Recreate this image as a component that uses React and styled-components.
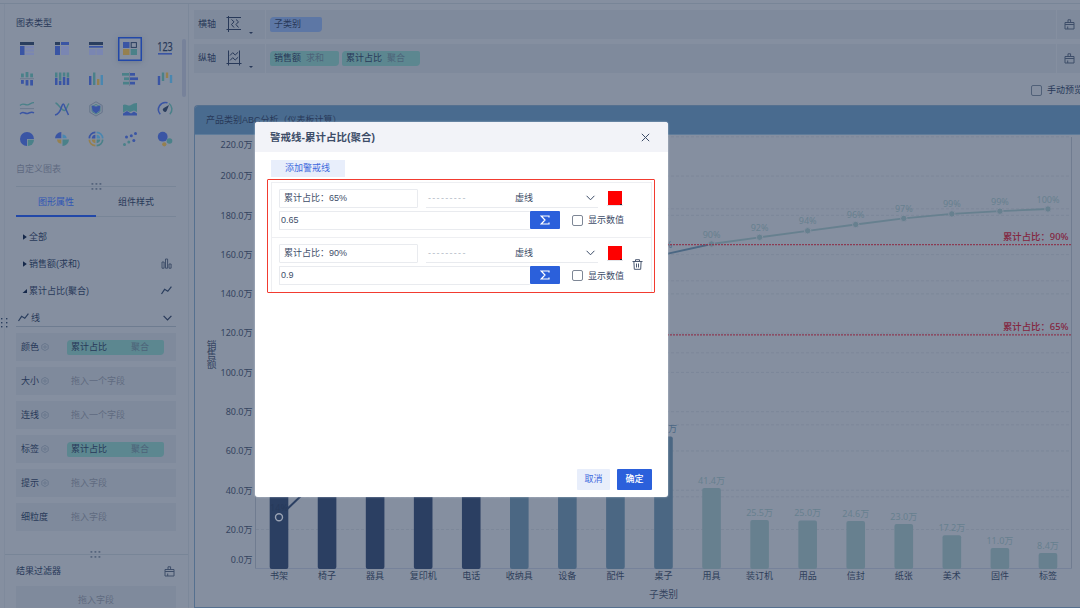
import React from "react";
import styled, { createGlobalStyle } from "styled-components";

const c = {
  bg: "#858fa0",
  row: "#7f8a9c",
  line: "#788597",
  text: "#283959",
  soft: "#5f6a80",
  blue: "#2248a8",
  teal: "#5c8790",
  iconBlue: "#3a55a4",
  iconTeal: "#4a8189",
  iconGold: "#95804f",
  iconSky: "#4a87b0",
  iconPale: "#7a86b2",
  iconDark: "#2a3e5e",
};

const GlobalStyle = createGlobalStyle`
  *, *::before, *::after { box-sizing: border-box; }
  body {
    margin: 0;
    overflow: hidden;
    background: ${c.bg};
    font-family: "Liberation Sans", "Noto Sans CJK SC", sans-serif;
    font-size: 9px;
    line-height: 14px;
    color: ${c.text};
  }
`;

const Page = styled.div`
  position: relative;
  width: 1080px;
  height: 608px;
  overflow: hidden;
  display: flex;
  flex-direction: column;
  background: ${c.bg};
  white-space: nowrap;
`;
const TopStrip = styled.div`
  flex: none;
  height: 4px;
  border-bottom: 1px solid ${c.line};
`;
const Workspace = styled.div`
  flex: 1;
  min-height: 0;
  display: flex;
`;
const Gutter = styled.div`
  width: 5px;
  flex: none;
  border-right: 1px solid #7f8a9c;
  padding-top: 314px;
`;
const Sidebar = styled.aside`
  width: 184px;
  flex: none;
  display: flex;
  flex-direction: column;
  border-right: 1px solid #7c889a;
`;
const SectionTitle = styled.div`
  padding: 12px 0 0 11px;
  height: 30px;
`;
const ChartTypes = styled.div`
  display: flex;
  height: 125px;
  padding-left: 5px;
`;
const TypeGrid = styled.div`
  display: grid;
  grid-template-columns: repeat(5, 34.4px);
  grid-template-rows: 29px 31px 30px 30px;
  align-items: center;
  justify-items: center;
`;
const TypeCell = styled.div`
  width: 24px;
  height: 24px;
  display: grid;
  place-items: center;
  border: 1px solid transparent;
  ${(p) => p.$active && `border-color: ${c.blue}; box-shadow: 0 1px 5px #6a7890, inset 0 0 0 .5px ${c.blue};`}
`;
const ScrollThumb = styled.div`
  width: 4px;
  height: 58px;
  margin: 5px 0 0 0;
  border-radius: 2px;
  background: #77829a;
`;
const CustomLabel = styled.div`
  padding: 3px 0 0 11px;
  height: 24px;
  color: ${c.soft};
`;
const Splitter = styled.div`
  display: flex;
  justify-content: center;
  align-items: center;
  height: 7px;
  padding-right: ${(p) => (p.$full ? 2 : 0)}px;
  margin: ${(p) => (p.$full ? "0" : "0 12px 0 11px")};
  background: linear-gradient(${c.line}, ${c.line}) 0 3px / 100% 1px no-repeat;
`;
const Tabs = styled.div`
  display: flex;
  margin: 0 12px 0 11px;
  height: 27px;
`;
const Tab = styled.div`
  flex: 1;
  text-align: center;
  padding-top: 5px;
  color: ${(p) => (p.$active ? "#2f55b4" : c.text)};
  border-bottom: ${(p) => (p.$active ? `2px solid ${c.blue}` : `1px solid ${c.line}`)};
`;
const Tree = styled.div`
  padding: 6px 12px 0 17px;
  height: 87px;
`;
const TreeRow = styled.div`
  display: flex;
  align-items: center;
  height: 27px;
  gap: 2px;
  padding-right: 4px;
`;
const Grow = styled.span`
  flex: 1;
`;
const LineHead = styled.div`
  display: flex;
  align-items: center;
  gap: 2px;
  height: 23px;
  margin: 0 12px 0 11px;
  padding: 5px 4px 0 2px;
  border-bottom: 1px solid #6e7c90;
`;
const Slots = styled.div`
  display: flex;
  flex-direction: column;
  gap: 6px;
  padding: 6px 12px 0 11px;
  height: 224px;
`;
const Slot = styled.div`
  height: 28px;
  flex: none;
  display: flex;
  align-items: center;
  padding-left: 5px;
  background: ${c.row};
`;
const SlotName = styled.span`
  width: 46px;
  display: flex;
  align-items: center;
  gap: 2px;
`;
const Hint = styled.span`
  color: ${c.soft};
  padding-left: 4px;
`;
const Pill = styled.span`
  display: inline-flex;
  align-items: center;
  justify-content: ${(p) => (p.$spread ? "space-between" : "flex-start")};
  gap: 5px;
  width: ${(p) => p.$w}px;
  height: 15px;
  padding: 0 ${(p) => (p.$spread ? 15 : 4)}px 0 4px;
  border-radius: 4px 2px 4px 2px;
  background: ${(p) => (p.$blue ? "#5d77a5" : c.teal)};
`;
const Agg = styled.span`
  color: #4d6379;
`;
const FilterHead = styled.div`
  display: flex;
  justify-content: space-between;
  align-items: center;
  height: 28px;
  padding: 0 13px 2px 11px;
`;
const FilterDrop = styled.div`
  margin: 0 12px 0 11px;
  flex: 1;
  padding-top: 7px;
  text-align: center;
  color: ${c.soft};
  background: ${c.row};
`;

const Main = styled.main`
  flex: 1;
  min-width: 0;
  display: flex;
  flex-direction: column;
  padding: 6px 0 0 5px;
`;
const AxisRow = styled.div`
  display: flex;
  align-items: center;
  height: 29px;
  flex: none;
  margin-bottom: 5px;
  background: ${c.row};
`;
const AxisName = styled.div`
  width: 72px;
  height: 100%;
  display: flex;
  align-items: center;
  padding: 0 0 1px 4px;
  border-right: 1px solid ${c.bg};
`;
const AxisIcon = styled.span`
  display: flex;
  margin-left: 10px;
`;
const Caret = styled.i`
  border: 2px solid transparent;
  border-top-color: ${c.text};
  border-bottom: 0;
  margin: 17px 0 0 7px;
`;
const PillList = styled.div`
  flex: 1;
  display: flex;
  gap: 3px;
  padding: 0 0 1px 4px;
`;
const AxisClear = styled.div`
  width: 24px;
  height: 100%;
  display: flex;
  align-items: center;
  padding: 0 0 1px 7px;
  border-left: 1px solid ${c.bg};
`;
const Preview = styled.div`
  display: flex;
  align-items: center;
  height: 26px;
  padding: 0 0 2px 837px;
  gap: 5px;
  margin-bottom: 1px;
`;
const Check = styled.span`
  width: 11px;
  height: 11px;
  flex: none;
  border: 1px solid ${(p) => (p.$dim ? "#506078" : "#7e8796")};
  border-radius: 2px;
`;
const ChartCard = styled.section`
  flex: 1;
  min-height: 0;
  border: 1px solid #55708f;
  border-right: 0;
  border-radius: 4px 0 0 0;
  overflow: hidden;
`;
const ChartTitle = styled.div`
  height: 29px;
  padding: 7px 0 0 11px;
  background: #496b8f;
  border-bottom: 1px solid #5f7c9a;
`;
const Plot = styled.svg`
  display: block;
  font-family: "Noto Sans", "Noto Sans CJK SC", sans-serif;
  font-size: 9px;
`;

const Modal = styled.div`
  position: absolute;
  left: 255px;
  top: 122px;
  width: 413px;
  height: 375px;
  display: flex;
  flex-direction: column;
  overflow: hidden;
  border-radius: 3px;
  background: #fff;
  color: #3d4d68;
  box-shadow: 0 0 2px rgba(230, 238, 250, 0.7);
`;
const ModalHead = styled.header`
  display: flex;
  align-items: center;
  justify-content: space-between;
  height: 30px;
  padding: 0 18px 0 15px;
  background: #f2f3f8;
  font-size: 10.5px;
  font-weight: 700;
`;
const AddButton = styled.div`
  width: 74px;
  height: 17px;
  margin: 8px 0 2px 16px;
  padding-right: 1px;
  line-height: 17px;
  text-align: center;
  background: #e8eefb;
  color: #3f69dd;
`;
const RedFrame = styled.div`
  width: 388px;
  height: 114px;
  margin-left: 12px;
  padding: 2px 2px 0 3px;
  border: 1px solid #f23b30;
  border-radius: 1px;
`;
const Entries = styled.div`
  height: 110px;
  border: solid #eeeff2;
  border-width: 1px 1px 0 1px;
`;
const Entry = styled.div`
  display: flex;
  align-items: center;
  height: 55px;
  padding: 0 0 2px 7px;
  border-bottom: ${(p) => (p.$last ? 0 : 1)}px solid #eeeff2;
`;
const EntryLines = styled.div`
  width: 353px;
  display: flex;
  flex-direction: column;
  gap: 3px;
`;
const EntryLine = styled.div`
  display: flex;
  height: 19px;
`;
const Input = styled.div`
  width: ${(p) => p.$w}px;
  height: 19px;
  padding-left: ${(p) => p.$pad}px;
  line-height: 17px;
  border: 1px solid #e9ebef;
  border-right-width: ${(p) => (p.$joined ? 0 : 1)}px;
  border-radius: 1px;
`;
const StyleSelect = styled.div`
  width: 172px;
  margin-left: 8px;
  display: flex;
  align-items: center;
  border-bottom: 1px solid #e9ebef;
`;
const Dashes = styled.span`
  width: 89px;
  padding-left: 2px;
  letter-spacing: 1.3px;
  color: #b0b7c3;
`;
const Swatch = styled.div`
  width: 16px;
  height: 17px;
  margin-left: 9px;
  padding: 2px 0 0 1px;
  border-bottom: 1px solid #e3e5ea;
`;
const Color = styled.div`
  width: 14px;
  height: 14px;
  background: linear-gradient(#302030, #302030) 100% 100% / 2px 1px no-repeat, #fe0000;
`;
const SumButton = styled.div`
  width: 30px;
  height: 18px;
  display: grid;
  place-items: center;
  border-radius: 1px;
  background: #2b60db;
`;
const ShowValue = styled.div`
  display: flex;
  align-items: center;
  gap: 5px;
  margin-left: 12px;
`;
const Footer = styled.footer`
  display: flex;
  justify-content: flex-end;
  gap: 7px;
  margin-top: auto;
  padding: 0 16px 7px 0;
`;
const Button = styled.div`
  width: ${(p) => (p.$primary ? 35 : 33)}px;
  height: 21px;
  line-height: 21px;
  text-align: center;
  border-radius: 1px;
  font-weight: ${(p) => (p.$primary ? 500 : 400)};
  color: ${(p) => (p.$primary ? "#fff" : "#3f69dd")};
  background: ${(p) => (p.$primary ? "#2b60db" : "#e8eefb")};
`;

const Svg = ({ w = 16, h = w, children, ...rest }) => (
  <svg width={w} height={h} viewBox={`0 0 ${w} ${h}`} fill="none" overflow="visible" {...rest}>
    {children}
  </svg>
);
const R = ({ b, f }) => <rect x={b[0]} y={b[1]} width={b[2]} height={b[3]} fill={f} />;
const { iconBlue: B, iconTeal: T, iconGold: G, iconSky: S, iconPale: P, iconDark: D } = c;

const DragDots = ({ f = "#56657d" }) => (
  <Svg w={11} h={7}>
    {[0.5, 4.5, 8.5].map((x) => [0, 5].map((y) => <R key={`${x}${y}`} b={[x, y, 1.8, 1.8]} f={f} />))}
  </Svg>
);
const SideDots = () => (
  <svg width="9" height="12" viewBox="0 0 9 12" overflow="visible" display="block">
    {[1, 6].map((x) => [0, 4, 8].map((y) => <R key={`${x}${y}`} b={[x, y, 1.4, 1.4]} f={D} />))}
  </svg>
);
const Gear = () => (
  <Svg w={8} stroke="#66758b" strokeWidth=".9">
    <path d="M4 .4 7.200 2.200v3.600L4 7.600.8 5.800V2.200z" />
    <circle cx="4" cy="4" r="1.200" />
  </Svg>
);
const Brush = () => (
  <Svg w={11} stroke="#3e4e69" strokeWidth="1">
    <path d="M1 3.500h9v6.500H1zM4 3.500V.8h2.600v2.700M1 5.500h9M3.700 7.500V10" />
  </Svg>
);
const Chevron = ({ s = c.text }) => (
  <Svg w={9} h={6} stroke={s} strokeWidth="1.200">
    <path d="m.6.8 3.900 4 3.900-4" />
  </Svg>
);
const LineIcon = () => (
  <Svg w={11} h={9} stroke={D} strokeWidth="1.200">
    <path d="M.5 8 3.600 3.300l3.200 2L10.400.7" />
  </Svg>
);
const BarsIcon = () => (
  <Svg w={11} h={11} stroke="#3e4e69" strokeWidth="1">
    <path d="M1 4h2.100v6.200H1zM4.500 1h2.100v9.200H4.500zM8 6h2.100v4.200H8z" />
  </Svg>
);
const Arrow = ({ open }) => (
  <Svg w={5} h={6}>
    <path d={open ? "M5 1v4H.5z" : "M1 .3 4.800 3 1 5.700z"} fill="#15284a" />
  </Svg>
);
const Trash = () => (
  <Svg w={11} stroke="#4a5870" strokeWidth="1">
    <path d="M.5 2.500h10M3.500 2.500V.7h4v1.800M1.900 2.500l.4 7.800h6.400l.4-7.800M4.500 4.500v4M6.500 4.500v4" />
  </Svg>
);
const AxisX = () => (
  <Svg w={16} stroke={c.text} strokeWidth="1">
    <path d="M2.500 0v16M.5 1.500h14.500M.5 13.500h14.500M5.500 3.500l2.500 2.300-2.500 2.700 2.500 3M10 3.500l2.500 2.300-2.500 2.700 2.500 3" />
  </Svg>
);
const AxisY = () => (
  <Svg w={16} stroke={c.text} strokeWidth="1">
    <path d="M2.500.5v15M13.500.5v15M.5 13.500h15M4 5.500l2.700-2.800 2.500 2.300 3-2.800M4 10.500l2.700-2.800 2.500 2.300 3-2.800" />
  </Svg>
);

const typeIcons = [
  <><R b={[1, 1, 14, 3]} f={D} /><R b={[1, 5, 4.5, 9]} f={B} /><R b={[6.5, 5, 8.5, 2.3]} f={P} /><R b={[6.5, 8.3, 8.5, 2.3]} f={P} /><R b={[6.5, 11.6, 8.5, 2.4]} f={P} /></>,
  <><R b={[1, 1, 5, 3]} f={D} /><R b={[7, 1, 8, 3]} f={B} /><R b={[1, 5, 5, 9]} f={B} /><R b={[7, 5, 8, 9]} f={P} /></>,
  <><R b={[1, 1, 14, 3]} f={D} /><R b={[1, 5, 14, 1.7]} f={B} /><R b={[1, 8, 6.6, 6]} f={P} /><R b={[8.5, 8, 6.5, 6]} f={P} /></>,
  <><R b={[1, 1, 6.5, 6]} f={B} /><rect x="9.2" y="1.6" width="5.2" height="4.8" stroke={D} /><R b={[1, 8, 6.5, 6]} f={G} /><R b={[8.7, 8, 6.3, 6]} f={T} /></>,
  <><text x="8" y="10" textAnchor="middle" fontSize="12" fontFamily="Open Sans, sans-serif" fill={c.text} stroke={c.text} strokeWidth=".25" textLength="15.500" lengthAdjust="spacingAndGlyphs">123</text><R b={[1, 12, 14, 1.6]} f={B} /></>,
  <><R b={[2, 2.5, 2.8, 3.8]} f={T} /><R b={[6.6, 1, 2.8, 5.3]} f={T} /><R b={[11.2, 2.5, 2.8, 3.8]} f={T} /><R b={[1, 7.2, 14, 1]} f="#6c7a8f" /><R b={[2, 9, 2.8, 3.8]} f={B} /><R b={[6.6, 9, 2.8, 5.5]} f={B} /><R b={[11.2, 9, 2.8, 5.5]} f={B} /></>,
  <>{[1, 4.9, 8.8, 12.7].map((x, i) => <g key={x}><R b={[x, 1.5, 2.5, [5, 8, 4, 5][i]]} f={T} /><R b={[x, 2 + [5, 8, 4, 5][i], 2.5, 12 - [5, 8, 4, 5][i]]} f={B} /></g>)}</>,
  <><R b={[1, 5, 2.4, 9]} f={B} /><R b={[5, 1.5, 2.4, 12.5]} f={T} /><R b={[9, 8, 2.4, 6]} f={G} /><R b={[12.6, 4, 2.4, 10]} f={S} /></>,
  <><R b={[0, 2, 7, 2.7]} f={T} /><R b={[2, 6.4, 5, 2.7]} f={T} /><R b={[1, 10.8, 6, 2.7]} f={T} /><R b={[7.2, 1, .8, 14]} f="#6c7a8f" /><R b={[8, 2, 5, 2.7]} f={B} /><R b={[8, 6.4, 8, 2.7]} f={B} /><R b={[8, 10.8, 5, 2.7]} f={B} /></>,
  <><R b={[.8, 5, 2.4, 9]} f={B} /><R b={[4.8, 1.5, 2.4, 8.5]} f={T} /><R b={[8.8, 1.5, 2.4, 5.5]} f={G} /><R b={[12.8, 4, 2.4, 8]} f={S} /></>,
  <><path d="M1 4.500c3-3.500 5 0 7.500-.6 2.500-.5 3.500-2.300 6.500-2.200" stroke={T} strokeWidth="1.300" /><path d="M1 7.600h14" stroke="#6c7a8f" /><path d="M1 13c3-3.500 5 0 7.500-.6 2.500-.5 3.500-2.300 6.500-.6" stroke={B} strokeWidth="1.500" /></>,
  <><path d="M1.500 2c3 .5 5.500 7.500 9 7.500 2 0 2.500-5 4.500-7" stroke={T} strokeWidth="1.400" /><path d="M1 14c3-.5 5-3 6.500-8 1.200-4 2.200-4 3.200-.5L14.500 14" stroke={B} strokeWidth="1.500" /></>,
  <><path d="M8 .8 14.200 4.400v7L8 15l-6.200-3.600v-7z" stroke="#66758b" /><path d="M8 3.500 12 5.500v5L8 13l-4-2.500v-5z" stroke={T} /><path d="m3.500 4.600 4.500.8 4.400-1-.8 5.400L8 12.400 4.600 10z" fill={B} /></>,
  <><path d="M1 4c3-2 5 2 8 0 2-1.300 3.500-2 6-2v9l-3-1.500L8 11 5 9.500l-4 2z" fill={T} /><path d="M1 12.500 5 10l4 2.500 3-2 3 2V14.500H1z" fill={B} /></>,
  <><path d="M3.300 13.200A7 7 0 0 1 10.500 1.800" stroke={B} strokeWidth="1.500" /><path d="M12 2.500a7 7 0 0 1 .8 10.700" stroke={T} strokeWidth="1.500" /><path d="m12 4-2.300 5.700a2 2 0 1 1-2.800-2.700z" fill={D} /></>,
  <><path d="M8 8V1a7 7 0 1 0 0 14z" fill={B} /><path d="M8 1a7 7 0 0 1 7 7H8z" fill={B} /><path d="M8.800 8.800H15a6.300 6.300 0 0 1-6.200 6.200z" fill={T} /></>,
  <><path d="M7.300 7.300H1A6.500 6.500 0 0 1 7.300 1z" fill={B} /><path d="M8.500 7.300V3.500a4.500 4.500 0 0 1 4.300 3.800z" fill={S} /><path d="M7.300 8.500v4.200A4.500 4.500 0 0 1 3 8.500z" fill={G} /><path d="M8.500 8.500H15A6.500 6.500 0 0 1 8.500 15z" fill={T} /></>,
  <>{[[S, 0], [T, 90], [G, 180], [B, 270]].map(([f, a]) => <g key={a} transform={`rotate(${a} 8 8)`}><path d="M8.600 1.300A6.500 6.500 0 0 1 14.700 7.400" stroke={f} strokeWidth="1.700" /><path d="M8.600 7.400V3.700A4.200 4.200 0 0 1 12.300 7.400z" fill={f} /></g>)}</>,
  <>{[[2.5, 13.5, T], [4.5, 6, B], [6.8, 11, T], [9.3, 4.8, B], [11.8, 9.5, B], [13.5, 2.5, B]].map(([x, y, f]) => <circle key={x} cx={x} cy={y} r="1.500" fill={f} />)}</>,
  <><circle cx="5.700" cy="5.700" r="4.900" fill={B} /><circle cx="12.500" cy="10" r="2.800" fill={T} /><circle cx="7.300" cy="13.300" r="2.100" fill={G} /></>,
];

const slots = [
  { name: "颜色", gear: true, field: true },
  { name: "大小", gear: true, hint: "拖入一个字段" },
  { name: "连线", gear: true, hint: "拖入一个字段" },
  { name: "标签", gear: true, field: true },
  { name: "提示", gear: true, hint: "拖入字段" },
  { name: "细粒度", hint: "拖入字段" },
];

const OX = 195;
const OY = 135;
const dark = "#2b3f62";
const mid = "#4b6783";
const light = "#67808f";
const bars = [
  ["书架", 300, dark], ["椅子", 310, dark], ["器具", 320, dark], ["复印机", 330, dark], ["电话", 340, dark],
  ["收纳具", 390, mid], ["设备", 400, mid], ["配件", 410, mid], ["桌子", 436.5, mid, "67.0万"],
  ["用具", 488, light, "41.4万"], ["装订机", 520, light, "25.5万"], ["用品", 520.5, light, "25.0万"],
  ["信封", 521, light, "24.6万"], ["纸张", 524, light, "23.0万"], ["美术", 535.3, light, "17.2万"],
  ["固件", 548, light, "11.0万"], ["标签", 553, light, "8.4万"],
];
const cumulative = [
  [8, 254.6, "87%"], [9, 244, "90%"], [10, 237.3, "92%"], [11, 230.8, "94%"], [12, 224.5, "96%"],
  [13, 218.4, "97%"], [14, 213.9, "99%"], [15, 211.2, "99%"], [16, 209, "100%"],
];
const cx = (i) => 279 + i * 48.06;

function ComboChart() {
  return (
    <Plot width={885} height={472} viewBox={`${OX} ${OY} 885 472`}>
      <g stroke="#7c8799" strokeWidth="1" strokeDasharray="3 2">
        {Array.from({ length: 11 }, (_, i) => <path key={i} d={`M256 ${529.5 - i * 39.27}H1071`} />)}
        {Array.from({ length: 5 }, (_, i) => <path key={i} d={`M256 ${496.8 - i * 72}H1071`} />)}
      </g>
      <path d="M255.500 568.500H1071.500" stroke="#76829a" />
      <path d="M255.500 137V568.500M1071.500 137V568.500" stroke="#707c90" />
      <g fill="#34445f" textAnchor="end">
        {Array.from({ length: 12 }, (_, i) => (
          <text key={i} x="252.500" y={(i === 0 ? 559.5 : i === 11 ? 144.7 : 568.8 - i * 39.27) + 3.3}>{`${i * 20}.0万`}</text>
        ))}
      </g>
      <g fill="#34445f" fontSize="9.700" textAnchor="middle">
        {["销", "售", "额"].map((t, i) => <text key={t} x="211.500" y={348.7 + i * 9.7}>{t}</text>)}
        <text x="663.500" y="597.500">子类别</text>
      </g>
      {bars.map(([name, top, fill, value], i) => (
        <g key={name} textAnchor="middle">
          <rect x={cx(i) - 9.3} y={top} width="18.600" height={569 - top} rx="2" fill={fill} />
          {value && <text x={cx(i)} y={top - 4.2} fill={i === 8 ? mid : light}>{value}</text>}
          <text x={cx(i)} y="579" fill="#2e3e5a">{name}</text>
        </g>
      ))}
      <text x="279" y="510.500" textAnchor="middle" fill="#273a5b">14%</text>
      <path d="M287.500 508.700 304 493" stroke={dark} strokeWidth="2" />
      <circle cx="279" cy="517.300" r="3.500" fill={dark} stroke="#99a2b3" strokeWidth="1.400" />
      <path d={`M${cx(8)} 254.600L${cx(9)} 244`} stroke={mid} strokeWidth="1.800" />
      <polyline points={cumulative.slice(1).map(([i, y]) => `${cx(i)},${y}`).join(" ")} fill="none" stroke={light} strokeWidth="1.800" />
      {cumulative.map(([i, y, t]) => (
        <g key={i} fill={i === 8 ? mid : light}>
          <circle cx={cx(i)} cy={y} r="3.200" stroke={c.bg} strokeWidth="1" />
          <text x={cx(i)} y={y - 6.5} textAnchor="middle">{t}</text>
        </g>
      ))}
      {[["90%", 244.7], ["65%", 334.8]].map(([t, y]) => (
        <g key={t}>
          <path d={`M256 ${y}H1071`} stroke="#8c3a52" strokeWidth="1.300" strokeDasharray="2 1" />
          <text x="1068.500" y={y - 4.7} textAnchor="end" fill="#842640" fontWeight="500" fontSize="9.400">累计占比：{t}</text>
        </g>
      ))}
    </Plot>
  );
}

function WarningEntry({ label, value, last }) {
  return (
    <Entry $last={last}>
      <EntryLines>
        <EntryLine>
          <Input $w={139} $pad={4}>{label}</Input>
          <StyleSelect>
            <Dashes>---------</Dashes>
            <Grow>虚线</Grow>
            <Svg w={12} h={6} stroke="#3d4d68"><path d="m.6.8 3.900 4 3.900-4" /></Svg>
          </StyleSelect>
          <Swatch><Color /></Swatch>
        </EntryLine>
        <EntryLine>
          <Input $w={251} $pad={1} $joined>{value}</Input>
          <SumButton>
            <Svg w={10} stroke="#fff" strokeWidth="1.200"><path d="M9 2.600V1H1.200L5 5 1.200 9H9V7.400" /></Svg>
          </SumButton>
          <ShowValue><Check />显示数值</ShowValue>
        </EntryLine>
      </EntryLines>
      {last && <Trash />}
    </Entry>
  );
}

export default function App() {
  return (
    <Page>
      <GlobalStyle />
      <TopStrip />
      <Workspace>
        <Gutter><SideDots /></Gutter>
        <Sidebar>
          <SectionTitle>图表类型</SectionTitle>
          <ChartTypes>
            <TypeGrid>
              {typeIcons.map((icon, i) => (
                <TypeCell key={i} $active={i === 3}><Svg>{icon}</Svg></TypeCell>
              ))}
            </TypeGrid>
            <ScrollThumb />
          </ChartTypes>
          <CustomLabel>自定义图表</CustomLabel>
          <Splitter><DragDots /></Splitter>
          <Tabs>
            <Tab $active>图形属性</Tab>
            <Tab>组件样式</Tab>
          </Tabs>
          <Tree>
            <TreeRow><Arrow /><Grow>全部</Grow></TreeRow>
            <TreeRow><Arrow /><Grow>销售额(求和)</Grow><BarsIcon /></TreeRow>
            <TreeRow><Arrow open /><Grow>累计占比(聚合)</Grow><LineIcon /></TreeRow>
          </Tree>
          <LineHead><LineIcon /><Grow>线</Grow><Chevron /></LineHead>
          <Slots>
            {slots.map((s) => (
              <Slot key={s.name}>
                <SlotName>{s.name}{s.gear && <Gear />}</SlotName>
                {s.field ? <Pill $w={97} $spread>累计占比<Agg>聚合</Agg></Pill> : <Hint>{s.hint}</Hint>}
              </Slot>
            ))}
          </Slots>
          <Splitter $full><DragDots /></Splitter>
          <FilterHead>结果过滤器<Brush /></FilterHead>
          <FilterDrop>拖入字段</FilterDrop>
        </Sidebar>
        <Main>
          <AxisRow>
            <AxisName>横轴<AxisIcon><AxisX /></AxisIcon><Caret /></AxisName>
            <PillList><Pill $w={52} $blue>子类别</Pill></PillList>
            <AxisClear><Brush /></AxisClear>
          </AxisRow>
          <AxisRow>
            <AxisName>纵轴<AxisIcon><AxisY /></AxisIcon><Caret /></AxisName>
            <PillList>
              <Pill $w={69}>销售额<Agg>求和</Agg></Pill>
              <Pill $w={78}>累计占比<Agg>聚合</Agg></Pill>
            </PillList>
            <AxisClear><Brush /></AxisClear>
          </AxisRow>
          <Preview><Check $dim />手动预览</Preview>
          <ChartCard>
            <ChartTitle>产品类别ABC分析（仪表板计算）</ChartTitle>
            <ComboChart />
          </ChartCard>
        </Main>
      </Workspace>
      <Modal>
        <ModalHead>
          警戒线-累计占比(聚合)
          <Svg w={9} stroke="#3d4d68"><path d="m.8.8 7.400 7.400M8.200.8.800 8.200" /></Svg>
        </ModalHead>
        <AddButton>添加警戒线</AddButton>
        <RedFrame>
          <Entries>
            <WarningEntry label="累计占比：65%" value="0.65" />
            <WarningEntry label="累计占比：90%" value="0.9" last />
          </Entries>
        </RedFrame>
        <Footer>
          <Button>取消</Button>
          <Button $primary>确定</Button>
        </Footer>
      </Modal>
    </Page>
  );
}
